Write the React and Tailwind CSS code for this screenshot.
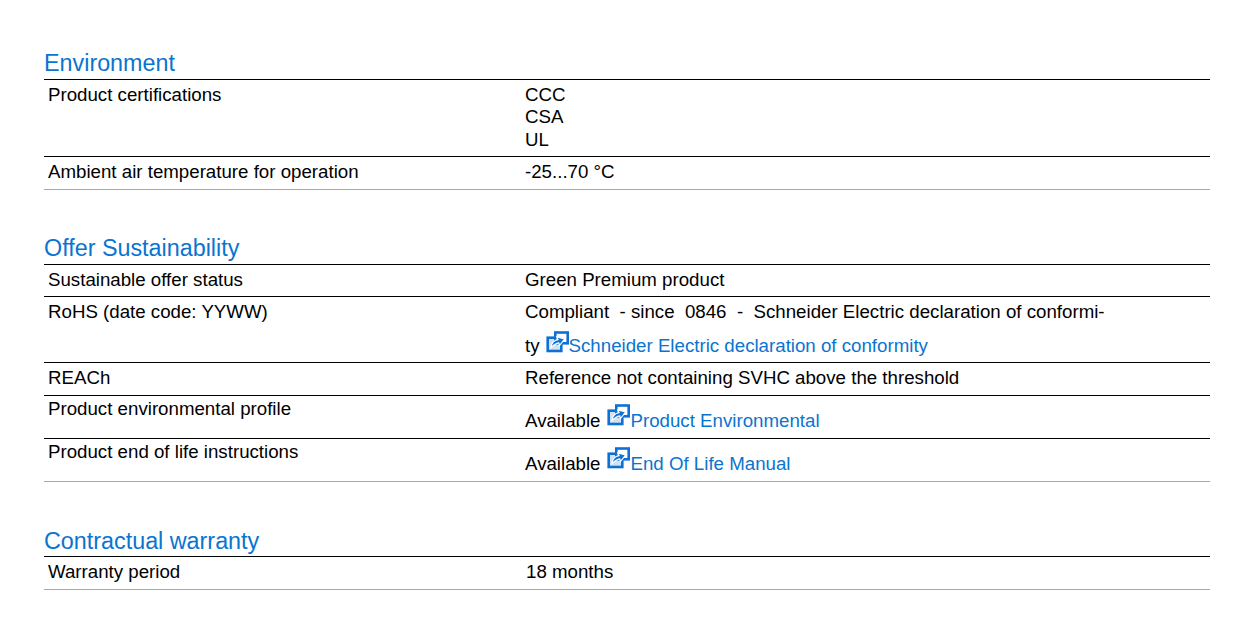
const Icon = () => (
  <svg width="23" height="22" viewBox="0 0 23 22" className="inline-block shrink-0" aria-hidden="true">
    <rect x="1.7" y="6.7" width="13.6" height="13.3" fill="#cfe2f7" stroke="#0f70d4" strokeWidth="2.6" />
    <rect x="9.3" y="1.5" width="12.4" height="10.8" fill="#ffffff" stroke="#0f70d4" strokeWidth="2.6" />
    <path d="M5 16.5 C5.5 12 8.5 9.2 12 8.6 L10.8 5.8 L18.5 8 L13.5 14.5 L12.8 11.8 C10 12.2 7.5 14 5 16.5 Z" fill="#0f70d4" stroke="#ffffff" strokeWidth="1.2" />
  </svg>
);

const Link = ({ children }) => <span className="text-[#0a74d0]">{children}</span>;

const Row = ({ label, children, h, last, labelClass = "pt-[4px]", valueClass = "" }) => (
  <div className={`grid grid-cols-[477px_1fr] ${h} border-b ${last ? "border-[#a8a8a8]" : "border-black"}`}>
    <div className={`pl-[4px] ${labelClass}`}>{label}</div>
    <div className={`pl-[4px] ${valueClass}`}>{children}</div>
  </div>
);

const Available = ({ text }) => (
  <div className="flex items-end h-full pb-[6px]">
    <span>Available</span>
    <span className="ml-[6px] mr-[1px] mb-[6px]"><Icon /></span>
    <Link>{text}</Link>
  </div>
);

const Section = ({ title, top, titleClass = "leading-[28px]", children }) => (
  <section className={top}>
    <h2 className={`text-[23.33px] ${titleClass} text-[#0a74d0] border-b border-black h-[31px]`}>{title}</h2>
    {children}
  </section>
);

export default function App() {
  return (
    <div className="w-[1239px] h-[618px] bg-white pl-[44px] pr-[29px] text-[18.7px] leading-[22.5px] text-black font-['Liberation_Sans',Arial,sans-serif] overflow-hidden">
      <Section title="Environment" top="pt-[49px]">
        <Row label="Product certifications" h="h-[77px]" valueClass="pt-[4px]">
          <div>CCC</div>
          <div className="-mt-[1px] mb-[1px]">CSA</div>
          <div>UL</div>
        </Row>
        <Row label="Ambient air temperature for operation" h="h-[33px]" last valueClass="pt-[4px]">-25...70 °C</Row>
      </Section>
      <Section title="Offer Sustainability" top="pt-[44px]">
        <Row label="Sustainable offer status" h="h-[32px]" valueClass="pt-[4px]">Green Premium product</Row>
        <Row label="RoHS (date code: YYWW)" h="h-[66px]" valueClass="pt-[4px]">
          <div>Compliant &nbsp;- since &nbsp;0846 &nbsp;- &nbsp;Schneider Electric declaration of conformi-</div>
          <div className="flex items-end mt-[6px]">
            <span>ty</span>
            <span className="ml-[6px] mb-[5px]"><Icon /></span>
            <Link>Schneider Electric declaration of conformity</Link>
          </div>
        </Row>
        <Row label="REACh" h="h-[33px]" valueClass="pt-[4px]">Reference not containing SVHC above the threshold</Row>
        <Row label="Product environmental profile" h="h-[43px]" labelClass="pt-[2px]"><Available text="Product Environmental" /></Row>
        <Row label="Product end of life instructions" h="h-[43px]" labelClass="pt-[2px]" last><Available text="End Of Life Manual" /></Row>
      </Section>
      <Section title="Contractual warranty" top="pt-[44px]" titleClass="leading-[30px]">
        <Row label="Warranty period" h="h-[33px]" last valueClass="pt-[4px] pl-[5px]">18 months</Row>
      </Section>
    </div>
  );
}
